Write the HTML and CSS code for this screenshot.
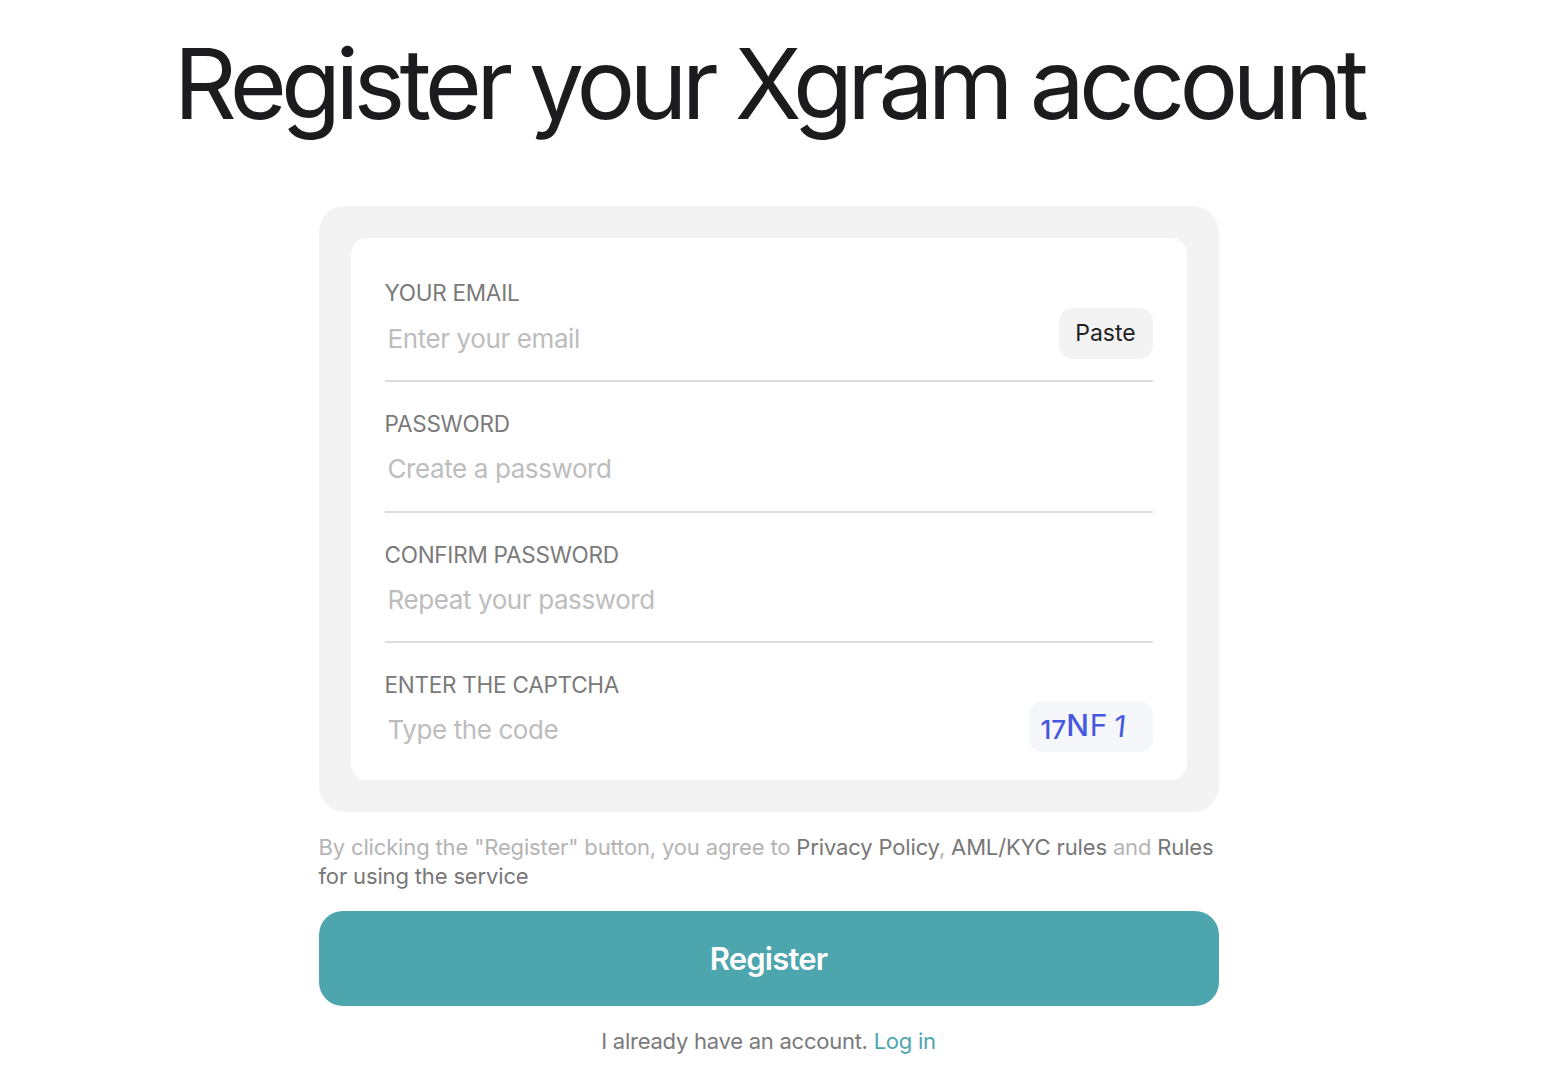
FILE: index.html
```html
<!DOCTYPE html>
<html lang="en">
<head>
<meta charset="utf-8">
<title>Register your Xgram account</title>
<link rel="stylesheet" href="styles.css">
</head>
<body>
<main class="page">
  <h1 class="title">Register your Xgram account</h1>
  <form class="form">
    <div class="card">
      <div class="card-inner">
        <div class="field field-first">
          <label class="label">YOUR EMAIL</label>
          <div class="row">
            <span class="placeholder">Enter your email</span>
            <span class="paste">Paste</span>
          </div>
        </div>
        <div class="field field-second">
          <label class="label">PASSWORD</label>
          <div class="row">
            <span class="placeholder">Create a password</span>
          </div>
        </div>
        <div class="field">
          <label class="label">CONFIRM PASSWORD</label>
          <div class="row">
            <span class="placeholder">Repeat your password</span>
          </div>
        </div>
        <div class="field field-last">
          <label class="label">ENTER THE CAPTCHA</label>
          <div class="row">
            <span class="placeholder">Type the code</span>
            <span class="captcha"><span class="c1">1</span><span class="c2">7</span><span class="c3">N</span><span class="c4">F</span><span class="c5">1</span></span>
          </div>
        </div>
      </div>
    </div>
    <p class="terms">By clicking the "Register" button, you agree to <a class="tlink">Privacy Policy</a>, <a class="tlink">AML/KYC rules</a> and <a class="tlink">Rules for using the service</a></p>
    <button type="button" class="submit">Register</button>
    <p class="login">I already have an account. <a class="login-link">Log in</a></p>
  </form>
</main>
</body>
</html>
```
FILE: styles.css
```css
* { box-sizing: border-box; }
html, body { margin: 0; padding: 0; background: #fff; }
body {
  font-family: Inter, "Noto Sans", "Liberation Sans", sans-serif;
  color: #1c1c1e;
}
.page {
  width: 1537px;
  display: flex;
  flex-direction: column;
  align-items: center;
}
.title {
  margin: 28px 0 0;
  font-size: 98px;
  line-height: 112px;
  font-weight: 400;
  letter-spacing: -5.75px;
  color: #1c1c1e;
  white-space: nowrap;
}
.form {
  width: 900px;
  margin-top: 66px;
  display: flex;
  flex-direction: column;
}
.card {
  background: #f3f3f3;
  border-radius: 26px;
  padding: 32px;
}
.card-inner {
  background: #fff;
  border-radius: 16px;
  padding: 0 34px;
}
.field {
  height: 130px;
  border-bottom: 2px solid #dcdcdc;
  padding-top: 28px;
  display: flex;
  flex-direction: column;
}
.field-first { height: 144px; padding-top: 41px; }
.field-second { height: 131px; }
.field-last { border-bottom: none; height: 137px; }
.label {
  font-size: 22.5px;
  line-height: 28px;
  color: #7a7a7a;
  letter-spacing: -0.25px;
}
.row {
  display: flex;
  align-items: center;
  justify-content: space-between;
  height: 52px;
  margin-top: 1px;
}
.field-first .row { margin-top: 2px; }
.placeholder {
  font-size: 26px;
  color: #bdbdbd;
  letter-spacing: -0.4px;
  padding-left: 3px;
  padding-top: 6px;
}
.paste {
  width: 94px;
  height: 51px;
  border-radius: 14px;
  background: #f3f3f3;
  color: #222;
  font-size: 23px;
  display: flex;
  align-items: center;
  justify-content: center;
  margin-top: -4px;
}
.captcha {
  width: 124px;
  height: 51px;
  border-radius: 14px;
  background: #f6f7fb;
  color: #4657e0;
  font-size: 30px;
  font-weight: 500;
  display: flex;
  align-items: center;
  padding-left: 12px;
  letter-spacing: 0;
  margin-top: 0;
}
.captcha span { display: inline-block; }
.c1, .c2 { font-size: 26px; transform: translateY(3px); }
.c3 { transform: translateY(-1px); }
.c4 { font-weight: 400; transform: translateY(-1px); margin-left: 1px; }
.c5 { transform: skewX(-6deg); margin-left: 6px; font-weight: 400; }
.terms {
  margin: 21px 0 0;
  font-size: 22px;
  line-height: 29px;
  color: #b4b4b4;
  letter-spacing: -0.15px;
}
.tlink { color: #777; text-decoration: none; }
.submit {
  margin-top: 20px;
  height: 95px;
  border: none;
  border-radius: 24px;
  background: #4da5ae;
  color: #fff;
  font-family: inherit;
  font-size: 31px;
  font-weight: 600;
  letter-spacing: -0.8px;
}
.login {
  margin: 21px 0 0;
  text-align: center;
  font-size: 22px;
  line-height: 28px;
  color: #7a7a7a;
  letter-spacing: -0.25px;
}
.login-link { color: #4da5ae; text-decoration: none; }
```
